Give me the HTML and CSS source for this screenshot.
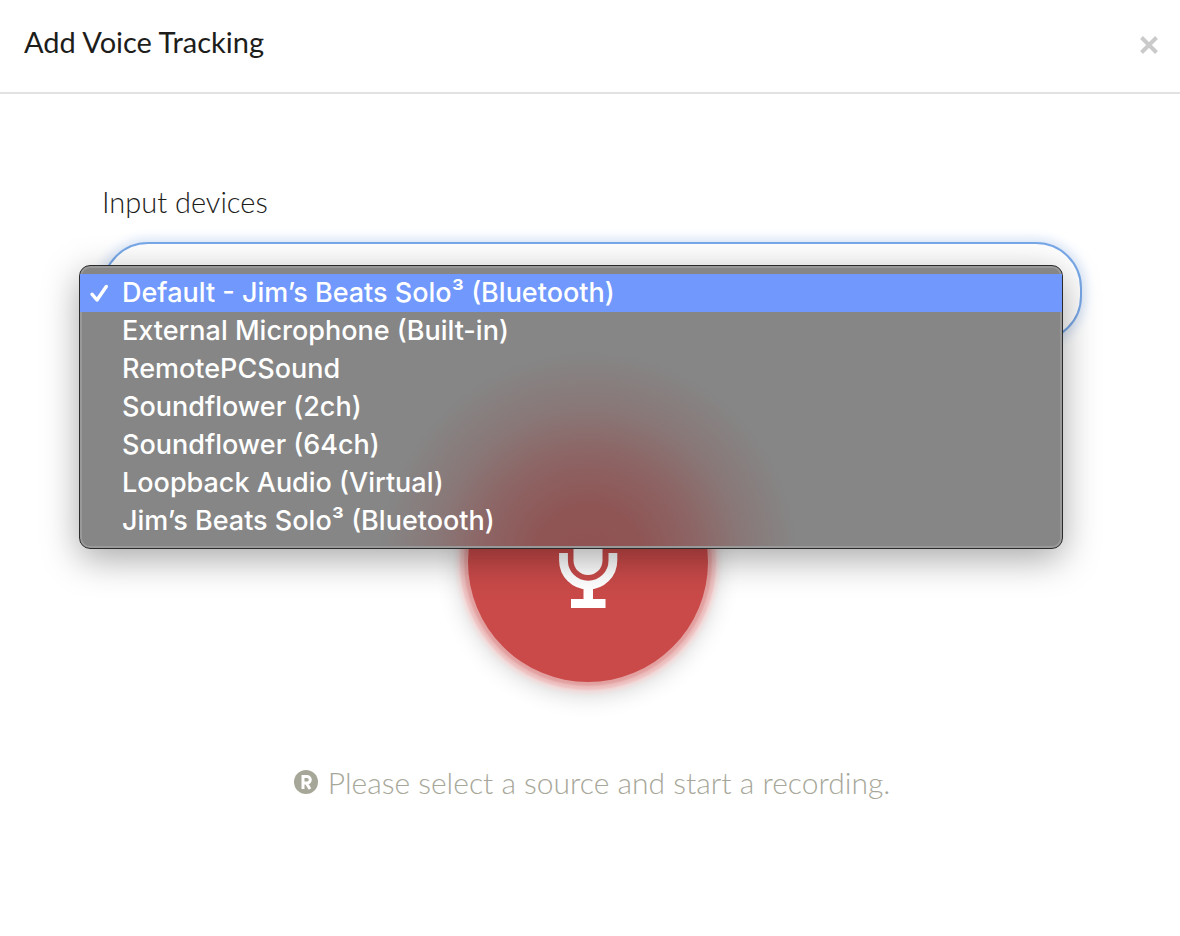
FILE: index.html
```html
<!DOCTYPE html>
<html lang="en">
<head>
<meta charset="utf-8">
<meta name="viewport" content="width=device-width, initial-scale=1">
<title>Add Voice Tracking</title>
<link rel="stylesheet" href="styles.css">
</head>
<body>
<div class="dialog" role="dialog" aria-labelledby="dialog-title">
  <header class="dialog-header">
    <h1 class="dialog-title" id="dialog-title">Add Voice Tracking</h1>
    <button class="close" type="button" aria-label="Close">
      <svg width="18" height="18" viewBox="0 0 18 18" aria-hidden="true"><path d="M1.500 1.500 16.500 16.500M16.500 1.500 1.500 16.500" stroke="#cacaca" stroke-width="4"/></svg>
    </button>
  </header>
  <main class="dialog-body">
    <div class="field">
      <label class="field-label" for="device">Input devices</label>
      <div class="picker">
        <select class="picker-select" id="device">
          <option selected>Default - Jim’s Beats Solo³ (Bluetooth)</option>
          <option>External Microphone (Built-in)</option>
          <option>RemotePCSound</option>
          <option>Soundflower (2ch)</option>
          <option>Soundflower (64ch)</option>
          <option>Loopback Audio (Virtual)</option>
          <option>Jim’s Beats Solo³ (Bluetooth)</option>
        </select>
        <ul class="menu">
          <li><button class="menu-item menu-item-active" type="button">
            <svg class="check" width="20" height="20" viewBox="0 0 20 20" aria-hidden="true"><path d="M3 11.200 8 17 17.300 3.500" fill="none" stroke="#fff" stroke-width="3.400" stroke-linecap="round" stroke-linejoin="round"/></svg>
            <span class="menu-text">Default - Jim’s Beats Solo³ (Bluetooth)</span></button></li>
          <li><button class="menu-item" type="button"><span class="menu-text">External Microphone (Built-in)</span></button></li>
          <li><button class="menu-item" type="button"><span class="menu-text">RemotePCSound</span></button></li>
          <li><button class="menu-item" type="button"><span class="menu-text">Soundflower (2ch)</span></button></li>
          <li><button class="menu-item" type="button"><span class="menu-text">Soundflower (64ch)</span></button></li>
          <li><button class="menu-item" type="button"><span class="menu-text">Loopback Audio (Virtual)</span></button></li>
          <li><button class="menu-item" type="button"><span class="menu-text">Jim’s Beats Solo³ (Bluetooth)</span></button></li>
        </ul>
      </div>
    </div>
    <div class="recorder">
      <button class="record" type="button" aria-label="Start recording">
        <svg width="60" height="92" viewBox="0 0 60 92" aria-hidden="true">
          <rect x="15.500" y="0" width="29" height="59" rx="14.500" fill="#fff"/>
          <path d="M5.500 37v7.500a24.700 24.700 0 0 0 49.400 0V37" fill="none" stroke="#fff" stroke-width="8.800"/>
          <path d="M25.500 70h9.500v13h12.500v9h-34.500v-9h12.500z" fill="#fff"/>
        </svg>
      </button>
    </div>
    <p class="hint">
      <svg width="24" height="24" viewBox="0 0 24 24" aria-hidden="true"><circle cx="12" cy="12" r="12" fill="#a7a799"/><path d="M9 19V6.500h4a3.300 3.300 0 0 1 0 6.600H9M12.300 13 16 19" fill="none" stroke="#fff" stroke-width="3"/></svg>
      <span>Please select a source and start a recording.</span>
    </p>
  </main>
</div>
</body>
</html>
```
FILE: styles.css
```css
* {
  box-sizing: border-box;
}

body {
  margin: 0;
  background: #fff;
  color: #1d1d1b;
  font-family: Lato, "Open Sans", sans-serif;
}

button {
  border: 0;
  padding: 0;
  background: none;
  font: inherit;
  color: inherit;
  cursor: pointer;
}

.dialog-header {
  display: flex;
  align-items: center;
  justify-content: space-between;
  padding: 22px 22px 30px 24px;
  border-bottom: 2px solid #e2e2e2;
}

.dialog-title {
  margin: 0;
  font-size: 29px;
  line-height: 40px;
  font-weight: 400;
}

.close {
  display: flex;
  padding: 6px 0 0;
}

.dialog-body {
  padding: 88px 98px 40px 102px;
}

.field-label {
  display: block;
  margin-bottom: 20px;
  font-size: 29px;
  line-height: 40px;
  font-weight: 300;
}

.picker {
  position: relative;
}

.picker-select {
  display: block;
  width: 100%;
  height: 100px;
  padding: 0 40px;
  appearance: none;
  border: 2px solid #78a8e8;
  border-radius: 46px;
  background: #fff;
  box-shadow: 0 0 12px 3px #d6e4f8;
  color: #1d1d1b;
  font: 300 29px Lato, sans-serif;
  outline: 0;
}

.menu {
  position: absolute;
  z-index: 1;
  top: 23px;
  left: -23px;
  right: 19px;
  margin: 0;
  padding: 8px 0;
  list-style: none;
  border: 1px solid #2b2b2b;
  border-radius: 11px;
  background: radial-gradient(circle at 509px 295px, #905252 0, #8f5555 55px, #8d6464 105px, #897878 155px, #868686 210px);
  box-shadow: inset 0 0 0 2px #999999, 0 10px 36px #00000058;
  color: #fff;
  font-family: Inter, sans-serif;
  font-size: 27px;
  line-height: 38px;
  font-weight: 500;
}

.menu-item {
  display: flex;
  align-items: center;
  width: 100%;
  padding-left: 42px;
  text-align: left;
}

.menu-item-active {
  gap: 13px;
  padding-left: 9px;
  background: #7098fd;
}

.check {
  flex: none;
}

.recorder {
  display: flex;
  justify-content: center;
  margin-top: 100px;
  padding-right: 8px;
}

.record {
  display: flex;
  align-items: center;
  justify-content: center;
  width: 240px;
  height: 240px;
  border-radius: 50%;
  background: #c94a49;
  box-shadow: 0 0 2px 4px #e3a0a0, 0 0 2px 8px #edc0c0, 0 0 4px 11px #f5dada, 0 4px 24px 8px #00000030;
}

.hint {
  display: flex;
  align-items: center;
  justify-content: center;
  gap: 10px;
  margin: 80px 0 0;
  color: #a7a799;
  font-size: 30px;
  line-height: 40px;
  font-weight: 300;
}
```
